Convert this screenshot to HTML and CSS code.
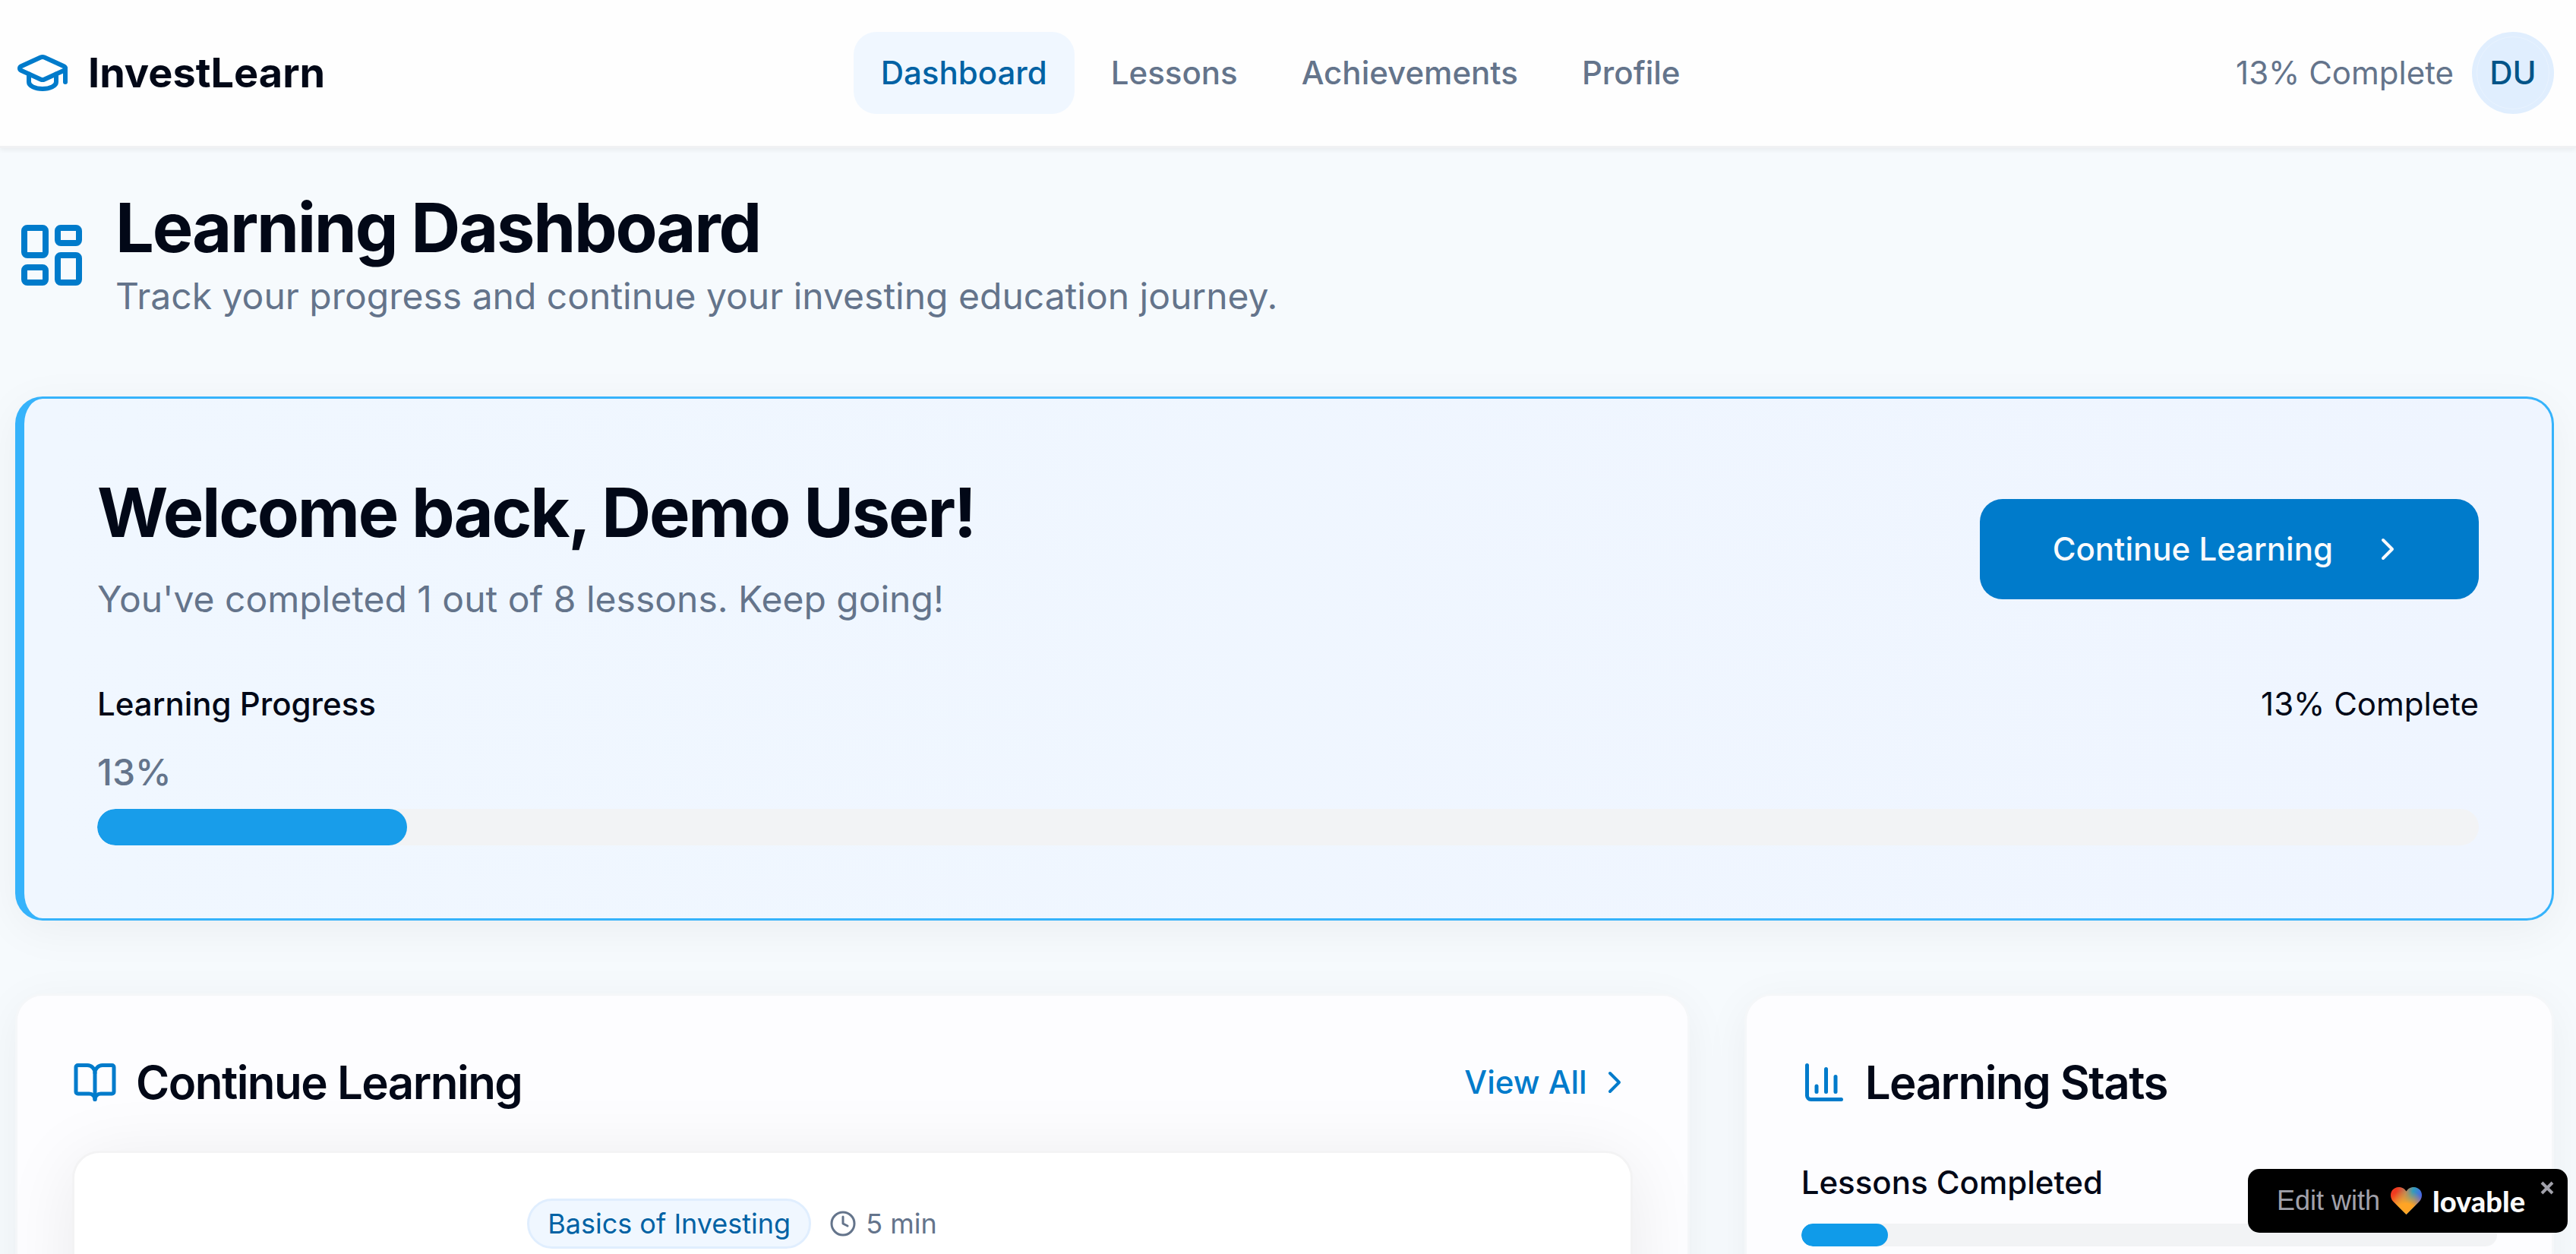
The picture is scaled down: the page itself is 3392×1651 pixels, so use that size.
FILE: index.html
```html
<!DOCTYPE html>
<html lang="en">
<head>
<meta charset="utf-8">
<meta name="viewport" content="width=device-width, initial-scale=1">
<title>InvestLearn</title>
<link rel="stylesheet" href="styles.css">
</head>
<body>
<div class="page">
  <header class="topbar">
    <a class="brand" href="#">
      <svg class="icon icon-brand" viewBox="0 0 24 24" aria-hidden="true"><path d="M21.42 10.922a1 1 0 0 0-.019-1.838L12.83 5.18a2 2 0 0 0-1.66 0L2.6 9.08a1 1 0 0 0 0 1.832l8.57 3.908a2 2 0 0 0 1.66 0z"/><path d="M22 10v6"/><path d="M6 12.5V16a6 3 0 0 0 12 0v-3.5"/></svg>
      <span>InvestLearn</span>
    </a>
    <nav class="nav">
      <a class="nav-link active" href="#">Dashboard</a>
      <a class="nav-link" href="#">Lessons</a>
      <a class="nav-link" href="#">Achievements</a>
      <a class="nav-link" href="#">Profile</a>
    </nav>
    <div class="account">
      <span>13% Complete</span>
      <button class="avatar" type="button"><span class="initials">DU</span></button>
    </div>
  </header>

  <main class="main">
    <div class="page-title">
      <svg class="icon icon-title" viewBox="0 0 24 24" aria-hidden="true"><rect width="7" height="9" x="3" y="3" rx="1"/><rect width="7" height="5" x="14" y="3" rx="1"/><rect width="7" height="9" x="14" y="12" rx="1"/><rect width="7" height="5" x="3" y="16" rx="1"/></svg>
      <div>
        <h1 class="heading">Learning Dashboard</h1>
        <p class="lead">Track your progress and continue your investing education journey.</p>
      </div>
    </div>

    <section class="welcome">
      <div class="welcome-top">
        <div class="welcome-text">
          <h2 class="heading">Welcome back, Demo User!</h2>
          <p class="lead">You've completed 1 out of 8 lessons. Keep going!</p>
        </div>
        <button class="primary" type="button">
          Continue Learning
          <svg class="icon icon-small" viewBox="0 0 24 24" aria-hidden="true"><path d="m9 18 6-6-6-6"/></svg>
        </button>
      </div>
      <div class="progress-block">
        <div class="progress-labels">
          <span class="label">Learning Progress</span>
          <span>13% Complete</span>
        </div>
        <div class="progress-value">13%</div>
        <div class="bar bar-large"><div class="fill" style="width: 13%"></div></div>
      </div>
    </section>

    <div class="columns">
      <section class="card">
        <div class="card-head">
          <h3 class="card-title">
            <svg class="icon icon-card" viewBox="0 0 24 24" aria-hidden="true"><path d="M12 7v14"/><path d="M3 18a1 1 0 0 1-1-1V4a1 1 0 0 1 1-1h5a4 4 0 0 1 4 4 4 4 0 0 1 4-4h5a1 1 0 0 1 1 1v13a1 1 0 0 1-1 1h-6a3 3 0 0 0-3 3 3 3 0 0 0-3-3z"/></svg>
            Continue Learning
          </h3>
          <a class="view-all" href="#">View All
            <svg class="icon icon-small" viewBox="0 0 24 24" aria-hidden="true"><path d="m9 18 6-6-6-6"/></svg>
          </a>
        </div>
        <article class="lesson">
          <div class="lesson-thumb"></div>
          <div class="lesson-meta">
            <span class="tag">Basics of Investing</span>
            <span class="duration">
              <svg class="icon icon-tiny" viewBox="0 0 24 24" aria-hidden="true"><circle cx="12" cy="12" r="10"/><path d="M12 6v6l4 2"/></svg>
              5 min
            </span>
          </div>
        </article>
      </section>

      <section class="card">
        <h3 class="card-title">
          <svg class="icon icon-card" viewBox="0 0 24 24" aria-hidden="true"><path d="M3 3v16a2 2 0 0 0 2 2h16"/><path d="M18 17V9"/><path d="M13 17V5"/><path d="M8 17v-3"/></svg>
          Learning Stats
        </h3>
        <div class="stat">
          <div class="label">Lessons Completed</div>
          <div class="bar"><div class="fill" style="width: 12.5%"></div></div>
        </div>
      </section>
    </div>
  </main>
</div>

<aside class="edit-badge">
  <a class="edit-link" href="#">
    <span>Edit with</span>
    <svg class="heart" viewBox="0 0 41 36" aria-hidden="true">
      <defs>
        <clipPath id="heart-shape"><path d="M20.500 36 3.500 19C-1.200 14-.9 7 2.800 3.300 7.500-1.300 15.500-1.200 19.200 3.800L20.500 5.500 21.800 3.800C25.500-1.200 33.500-1.300 38.200 3.300 41.900 7 42.200 14 37.500 19Z"/></clipPath>
        <linearGradient id="heart-base" x1="0" y1="0" x2="1" y2="0.300"><stop offset="0.200" stop-color="#f03a20"/><stop offset="0.500" stop-color="#b08a60"/><stop offset="0.700" stop-color="#2f9dbd"/><stop offset="1" stop-color="#4a63e8"/></linearGradient>
        <radialGradient id="heart-glow" gradientUnits="userSpaceOnUse" cx="20" cy="36" r="32"><stop offset="0.450" stop-color="#ffa424"/><stop offset="1" stop-color="#ff9a24" stop-opacity="0"/></radialGradient>
      </defs>
      <g clip-path="url(#heart-shape)"><rect width="41" height="36" fill="url(#heart-base)"/><rect width="41" height="36" fill="url(#heart-glow)"/></g>
    </svg>
    <span class="wordmark">lovable</span>
  </a>
  <button class="dismiss" type="button" aria-label="Close">
    <svg viewBox="0 0 18 18" aria-hidden="true"><path d="M2 2l14 14M16 2 2 16"/></svg>
  </button>
</aside>
</body>
</html>
```
FILE: styles.css
```css
:root {
  --ink: #020817;
  --muted: #64748b;
  --blue-50: #f0f7ff;
  --blue-100: #e0eefe;
  --blue-400: #36b3fb;
  --blue-500: #109be9;
  --blue-600: #007bcb;
  --blue-700: #0062a4;
  --blue-800: #005488;
}

* { box-sizing: border-box; }

body {
  margin: 0;
  background: #f6fafd;
  color: var(--ink);
  font-family: Inter, "Liberation Sans", sans-serif;
  font-size: 42px;
  line-height: 60px;
}

h1, h2, h3, p { margin: 0; }
a { color: inherit; text-decoration: none; }
button { border: 0; padding: 0; font: inherit; cursor: pointer; }

.page { height: 100vh; overflow: hidden; }

.icon {
  flex: none;
  fill: none;
  stroke: currentColor;
  stroke-width: 2;
  stroke-linecap: round;
  stroke-linejoin: round;
}
.icon-brand { width: 72px; height: 72px; color: var(--blue-600); }
.icon-title { width: 96px; height: 96px; color: var(--blue-600); }
.icon-card { width: 60px; height: 60px; color: var(--blue-600); }
.icon-small { width: 48px; height: 48px; }
.icon-tiny { width: 36px; height: 36px; }

.topbar {
  position: relative;
  display: flex;
  align-items: center;
  justify-content: space-between;
  height: 195px;
  padding: 0 29px 0 20px;
  background: #fefefe;
  border-bottom: 3px solid #f0f1f3;
  box-shadow: 0 3px 6px rgba(0, 0, 0, 0.05);
}
.brand {
  display: flex;
  align-items: center;
  gap: 24px;
  font-size: 54px;
  font-weight: 700;
}
.nav { display: flex; gap: 12px; }
.nav-link {
  padding: 24px 36px;
  border-radius: 30px;
  color: var(--muted);
  font-weight: 500;
}
.nav-link.active { background: var(--blue-50); color: var(--blue-700); }
.account {
  display: flex;
  align-items: center;
  gap: 24px;
  color: var(--muted);
}
.avatar {
  display: grid;
  place-items: center;
  width: 108px;
  height: 108px;
  border-radius: 50%;
  background: var(--blue-100);
  color: var(--blue-800);
  font-weight: 500;
}
.initials {
  width: 96px;
  height: 96px;
  border: 1px solid #e9f3fe;
  border-radius: 50%;
  line-height: 94px;
}

.main { padding: 51px 29px 96px 20px; }
.page-title {
  display: flex;
  align-items: center;
  gap: 36px;
  margin-bottom: 96px;
}
.heading {
  font-size: 90px;
  line-height: 108px;
  font-weight: 700;
  letter-spacing: -0.025em;
}
.lead {
  color: var(--muted);
  font-size: 48px;
  line-height: 72px;
}

.welcome {
  margin-bottom: 96px;
  padding: 96px;
  border: 3px solid var(--blue-400);
  border-left-width: 12px;
  border-radius: 36px;
  background: linear-gradient(90deg, #f0f7ff, #eff5ff);
  box-shadow: 0 12px 60px rgba(0, 0, 0, 0.05);
}
.welcome-top {
  display: flex;
  align-items: center;
  justify-content: space-between;
}
.welcome-text { display: grid; gap: 24px; }
.primary {
  display: flex;
  align-items: center;
  gap: 48px;
  padding: 36px 96px;
  border-radius: 30px;
  background: var(--blue-600);
  color: #f8fafc;
  font-weight: 500;
}
.progress-block { margin-top: 72px; }
.progress-labels { display: flex; justify-content: space-between; }
.label { font-weight: 500; }
.progress-value {
  margin: 24px 0 12px;
  color: var(--muted);
  font-size: 48px;
  line-height: 72px;
  font-weight: 500;
}
.bar {
  height: 30px;
  border-radius: 24px;
  background: #f2f3f5;
  overflow: hidden;
}
.bar-large { height: 48px; }
.fill {
  height: 100%;
  border-radius: 24px;
  background: var(--blue-500);
}
.bar-large .fill { background: #189dea; }

.columns {
  display: grid;
  grid-template-columns: repeat(3, minmax(0, 1fr));
  gap: 72px;
}
.card {
  min-height: 900px;
  padding: 72px;
  border: 3px solid #f5f7f9;
  border-radius: 36px;
  background: #fdfdff;
  box-shadow: 0 12px 60px rgba(0, 0, 0, 0.05);
}
.card:first-child { grid-column: span 2; }
.card-head {
  display: flex;
  align-items: center;
  justify-content: space-between;
}
.card-title {
  display: flex;
  align-items: center;
  gap: 24px;
  font-size: 60px;
  line-height: 84px;
  font-weight: 600;
  letter-spacing: -0.025em;
}
.view-all {
  display: flex;
  align-items: center;
  gap: 12px;
  color: var(--blue-600);
  font-weight: 500;
}
.lesson {
  display: flex;
  gap: 54px;
  min-height: 600px;
  margin-top: 48px;
  padding: 60px;
  border: 3px solid #f3f3f4;
  border-radius: 36px;
  background: #fff;
  box-shadow: 0 12px 96px rgba(0, 0, 0, 0.08);
}
.lesson-thumb { flex: 0 0 25%; }
.lesson-meta {
  display: flex;
  align-items: center;
  align-self: flex-start;
  gap: 24px;
  font-size: 36px;
  line-height: 48px;
}
.tag {
  padding: 6px 24px;
  border: 3px solid var(--blue-100);
  border-radius: 33px;
  background: var(--blue-50);
  color: var(--blue-700);
}
.duration {
  display: flex;
  align-items: center;
  gap: 12px;
  color: var(--muted);
}
.stat {
  display: grid;
  gap: 24px;
  margin-top: 60px;
}

.edit-badge {
  position: fixed;
  right: 11px;
  bottom: 28px;
  display: flex;
  gap: 20px;
  height: 84px;
  padding: 0 18px 0 38px;
  border-radius: 15px;
  background: #000;
  color: #a1a1aa;
}
.edit-link {
  display: flex;
  align-items: center;
  gap: 14px;
  font-family: "Liberation Sans", Arial, sans-serif;
  font-size: 36px;
}
.heart { width: 41px; height: 36px; }
.wordmark {
  color: #fafafa;
  font-family: Lato, sans-serif;
  font-size: 38px;
  font-weight: 900;
}
.dismiss {
  align-self: flex-start;
  margin-top: 16px;
  width: 18px;
  height: 18px;
  background: none;
  color: inherit;
  line-height: 0;
}
.dismiss svg {
  width: 18px;
  height: 18px;
  fill: none;
  stroke: currentColor;
  stroke-width: 4;
}
```
